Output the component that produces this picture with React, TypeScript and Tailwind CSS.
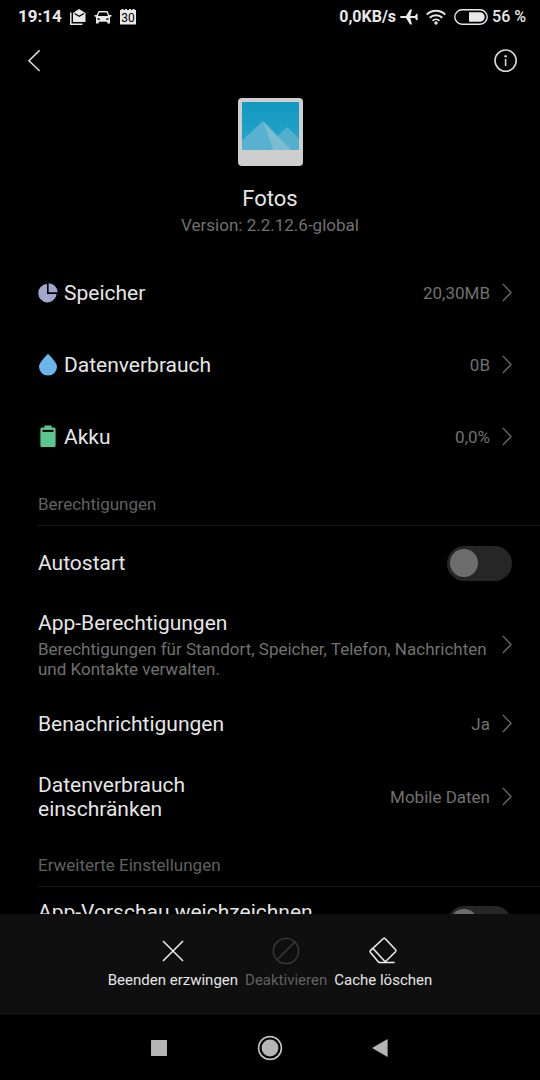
import { useState } from "react";
import type { ReactNode } from "react";

function Chevron() {
  return (
    <svg className="h-5 w-2.5 shrink-0" viewBox="0 0 10 20" fill="none" stroke="#707070" strokeWidth="1.3">
      <path d="M0.8 0.9 L9 9.4 L0.8 18.1" />
    </svg>
  );
}

function StorageIcon() {
  return (
    <svg className="size-5" viewBox="0 0 20 20" fill="#a3a6cc">
      <path d="M9 1 A9.2 9.2 0 1 0 18.6 11 H9 Z" />
      <path d="M10.6 0.3 A9 9 0 0 1 19.6 9.3 H10.6 Z" />
    </svg>
  );
}

function DataIcon() {
  return (
    <svg className="h-6 w-5" viewBox="0 0 20 24" fill="#6bb5ec">
      <path d="M10 0.4 C11 1.8 13 3.6 15.2 6.4 C17.4 9.2 19 11 19 13.7 A9 8.8 0 0 1 1 13.7 C1 11 2.6 9.2 4.8 6.4 C7 3.6 9 1.8 10 0.4 Z" />
    </svg>
  );
}

function BatteryIcon() {
  return (
    <svg className="h-6 w-5" viewBox="0 0 20 24">
      <path d="M6.5 0.6 H13.5 V2.6 H16 Q17.6 2.6 17.6 4.2 V20.4 Q17.6 22 16 22 H4 Q2.4 22 2.4 20.4 V4.2 Q2.4 2.6 4 2.6 H6.5 Z" fill="#5cc78c" />
      <rect x="4.6" y="4.9" width="10.8" height="2" fill="#000" />
    </svg>
  );
}

function PhotosLogo() {
  return (
    <svg className="h-[68px] w-[65px]" viewBox="0 0 65 68">
      <defs>
        <linearGradient id="sky" x1="0" y1="0" x2="0" y2="1">
          <stop offset="0" stopColor="#1199c0" />
          <stop offset="1" stopColor="#2ba4c9" />
        </linearGradient>
      </defs>
      <rect width="65" height="68" rx="4" fill="#cecece" />
      <rect x="4" y="4" width="57" height="48" fill="url(#sky)" />
      <path d="M39 38.5 L49 29 L61 40.5 V52 H52 Z" fill="#53afcc" />
      <path d="M4 42.5 L25 23 L35 52 H4 Z" fill="#58b1cf" />
      <path d="M25 23 L53 52 H35 Z" fill="#7bbdd1" />
    </svg>
  );
}

function StatusBar() {
  return (
    <div className="flex h-[34px] shrink-0 items-center justify-between pr-3.5 pl-[18px] text-[#e8e8e8]">
      <div className="flex items-center gap-2">
        <span className="text-[17px] font-bold">19:14</span>
        <svg className="size-4" viewBox="0 0 16 16">
          <path d="M0.8 3.6 V15.2 H12.5" fill="none" stroke="#e8e8e8" strokeWidth="1.5" />
          <path d="M3 4 L9 0 L15.5 4 V13 H3 Z" fill="#e8e8e8" />
          <path d="M4.5 4.5 L9.2 7.3 L14 4.5" fill="none" stroke="#000" strokeWidth="1.3" />
        </svg>
        <svg className="h-4 w-[18px]" viewBox="0 0 18 16" fill="#e8e8e8">
          <path fillRule="evenodd" d="M4.5 2 H13.5 L15.3 6 H17.5 V7.3 L16 8 V14.5 H13.3 V12.8 H4.7 V14.5 H2 V8 L0.5 7.3 V6 H2.7 Z M5.2 3.5 L4 7 H14 L12.8 3.5 Z M3.5 9 V10.8 H6 V9.7 Z M14.5 9 V10.8 H12 V9.7 Z" />
        </svg>
        <svg className="size-4" viewBox="0 0 16 16">
          <path d="M0 1 H1.5 V0 H3.5 V1 H5 V0 H7 V1 H9 V0 H11 V1 H12.5 V0 H14.5 V1 H16 V15.5 H0 Z" fill="#e8e8e8" />
          <text x="8" y="13" textAnchor="middle" fontFamily="Roboto, sans-serif" fontSize="12" fill="#000">30</text>
        </svg>
      </div>
      <div className="flex items-center gap-1">
        <span className="text-base font-bold">0,0KB/s</span>
        <svg className="h-4 w-[18px]" viewBox="0 0 18 16" fill="#e8e8e8">
          <path d="M0 8 Q0 7 1.5 7 H6 L10 0.5 H12 L10.3 7 H15 L16.4 4.8 H17.6 V11.2 H16.4 L15 9 H10.3 L12 15.5 H10 L6 9 H1.5 Q0 9 0 8 Z" />
        </svg>
        <svg className="mx-1 h-4 w-5" viewBox="0 0 20 16" fill="none" stroke="#e8e8e8" strokeWidth="1.9">
          <path d="M0.7 5.6 A13.2 13.2 0 0 1 19.3 5.6" />
          <path d="M3.7 8.8 A9 9 0 0 1 16.3 8.8" />
          <path d="M6.6 11.7 A4.9 4.9 0 0 1 13.4 11.7" />
          <circle cx="10" cy="14" r="1.7" fill="#e8e8e8" stroke="none" />
        </svg>
        <svg className="h-4 w-[34px]" viewBox="0 0 34 16">
          <rect x="0.8" y="0.8" width="32.4" height="14.4" rx="7.2" fill="none" stroke="#e8e8e8" strokeWidth="1.4" />
          <path d="M15 3.3 H26 A4.7 4.7 0 0 1 26 12.7 H15 Z" fill="#e8e8e8" />
        </svg>
        <span className="text-base font-medium">56 %</span>
      </div>
    </div>
  );
}

function StatRow({ icon, label, value }: { icon: ReactNode; label: string; value: string }) {
  return (
    <button className="flex h-[72px] w-full items-center pr-7 pl-[38px] text-left">
      {icon}
      <span className="ml-1.5 flex-1 text-[21px]/6">{label}</span>
      <span className="mr-3 text-[17px]/5 text-[#707070]">{value}</span>
      <Chevron />
    </button>
  );
}

function SectionTitle({ children }: { children: ReactNode }) {
  return (
    <h2 className="ml-[38px] border-b border-[#161616] pt-[21px] pb-[11px] text-[17px]/5 text-[#616161]">{children}</h2>
  );
}

function Toggle({ id }: { id: string }) {
  const [on, setOn] = useState(false);
  return (
    <input
      id={id}
      type="checkbox"
      role="switch"
      checked={on}
      onChange={() => setOn(!on)}
      className="h-[35px] w-[65px] shrink-0 appearance-none rounded-full bg-[#262626] p-[3px] before:block before:size-7 before:rounded-full before:bg-[#6c6c6c] checked:bg-[#1d5f9c] checked:before:ml-auto"
    />
  );
}

const actionClass = "flex flex-col items-center gap-1 text-[15px]/5";

export default function App() {
  return (
    <div className="flex h-screen flex-col overflow-hidden bg-black font-[Roboto,sans-serif] text-[#e6e6e6]">
      <StatusBar />
      <header className="flex h-[54px] shrink-0 items-center justify-between pr-[22px] pl-[27px]">
        <button aria-label="Zurück">
          <svg className="h-6 w-3.5" viewBox="0 0 14 24" fill="none" stroke="#d8d8d8" strokeWidth="1.6">
            <path d="M12.6 1.4 L2 11.7 L12.6 22" />
          </svg>
        </button>
        <button aria-label="Info">
          <svg className="size-6" viewBox="0 0 24 24" fill="none" stroke="#d8d8d8" strokeWidth="1.6">
            <circle cx="11.6" cy="11.6" r="10.6" />
            <path d="M11.6 10 V17" />
            <circle cx="11.6" cy="7.2" r="1.2" fill="#d8d8d8" stroke="none" />
          </svg>
        </button>
      </header>

      <main className="min-h-0 flex-1 overflow-hidden">
        {/* App info */}
        <div className="flex flex-col items-center pt-2.5 pb-[22px]">
          <PhotosLogo />
          <h1 className="mt-[21px] text-[22px]/6">Fotos</h1>
          <p className="mt-1 text-[17px]/5 text-[#707070]">Version: 2.2.12.6-global</p>
        </div>

        <StatRow icon={<StorageIcon />} label="Speicher" value="20,30MB" />
        <StatRow icon={<DataIcon />} label="Datenverbrauch" value="0B" />
        <StatRow icon={<BatteryIcon />} label="Akku" value="0,0%" />

        <SectionTitle>Berechtigungen</SectionTitle>
        <div className="flex h-[74px] items-center justify-between pr-7 pl-[38px]">
          <label htmlFor="autostart" className="text-[21px]/6">Autostart</label>
          <Toggle id="autostart" />
        </div>
        <button className="flex w-full items-center pt-[11px] pr-7 pb-[9px] pl-[38px] text-left">
          <span className="mr-3 flex-1">
            <span className="block text-[21px]/6">App-Berechtigungen</span>
            <span className="mt-1 block text-[17px]/5 text-[#707070]">
              Berechtigungen für Standort, Speicher, Telefon, Nachrichten und Kontakte verwalten.
            </span>
          </span>
          <Chevron />
        </button>
        <button className="flex h-[72px] w-full items-center pr-7 pl-[38px] text-left">
          <span className="flex-1 text-[21px]/6">Benachrichtigungen</span>
          <span className="mr-3 text-[17px]/5 text-[#707070]">Ja</span>
          <Chevron />
        </button>
        <button className="flex h-[74px] w-full items-center justify-between pr-7 pl-[38px] text-left">
          <span className="w-48 text-[21px]/6">Datenverbrauch einschränken</span>
          <span className="flex items-center gap-3 text-[17px]/5 text-[#707070]">
            Mobile Daten
            <Chevron />
          </span>
        </button>

        <SectionTitle>Erweiterte Einstellungen</SectionTitle>
        <div className="flex items-start justify-between pt-[19px] pr-7 pl-[38px]">
          <label htmlFor="blur" className="-mt-1.5 text-[21px]/6">App-Vorschau weichzeichnen</label>
          <Toggle id="blur" />
        </div>
      </main>

      {/* Actions */}
      <div className="flex h-[101px] shrink-0 items-start justify-center gap-[7px] bg-[#0f0f0f] pt-[22px]">
        <button className={actionClass}>
          <svg className="size-[30px]" viewBox="0 0 30 30" fill="none" stroke="#f0f0f0" strokeWidth="1.5">
            <path d="M5 5 L25 25 M25 5 L5 25" />
          </svg>
          Beenden erzwingen
        </button>
        <button disabled className={`${actionClass} text-[#616161]`}>
          <svg className="size-[30px]" viewBox="0 0 30 30" fill="none" stroke="#3a3a3a" strokeWidth="1.4">
            <circle cx="15" cy="15" r="12.6" />
            <path d="M6.2 23.8 L23.8 6.2" />
          </svg>
          Deaktivieren
        </button>
        <button className={actionClass}>
          <svg className="size-[30px]" viewBox="0 0 30 30" fill="none" stroke="#f0f0f0" strokeWidth="1.5" strokeLinejoin="round">
            <path d="M10.9 26.5 L2.5 16.6 Q1.6 15.4 2.6 14.4 L15.2 2.7 Q16.3 1.8 17.3 2.7 L27.6 13.8 Q28.4 14.8 27.5 15.8 L16.8 26.3" />
            <path d="M5 12.4 L17 25.4" />
            <path d="M10.6 26.5 H26.6" />
          </svg>
          Cache löschen
        </button>
      </div>

      <nav className="flex h-[65px] shrink-0 items-center justify-center gap-[88px]">
        <button aria-label="Übersicht">
          <svg className="size-5" viewBox="0 0 20 20" fill="#b5b5b5">
            <rect x="2" y="2" width="16" height="16" rx="0.6" />
          </svg>
        </button>
        <button aria-label="Startseite">
          <svg className="size-[26px]" viewBox="0 0 26 26" fill="#b5b5b5">
            <circle cx="13" cy="13" r="11.4" fill="none" stroke="#c4c4c4" strokeWidth="1.6" />
            <circle cx="13" cy="13" r="8.4" />
          </svg>
        </button>
        <button aria-label="Navigation zurück">
          <svg className="size-5" viewBox="0 0 20 20" fill="#b5b5b5">
            <path d="M1 10 L16.6 1 V19 Z" />
          </svg>
        </button>
      </nav>
    </div>
  );
}
